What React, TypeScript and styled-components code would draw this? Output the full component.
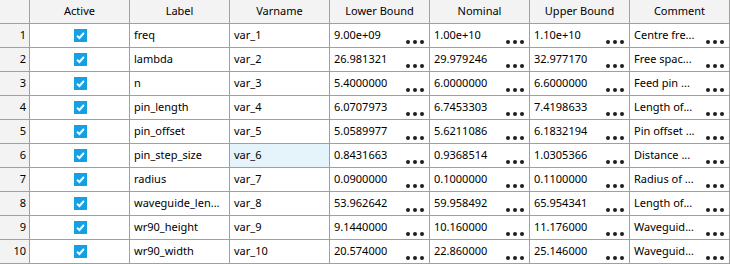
import React from "react";
import styled, { createGlobalStyle } from "styled-components";

const Global = createGlobalStyle`
  html, body { margin: 0; padding: 0; background: #ffffff; }
`;

const Grid = styled.div`
  display: grid;
  grid-template-columns: 30px repeat(7, 100px);
  grid-auto-rows: 24px;
  width: 730px;
  font-family: "Noto Sans", sans-serif;
  font-size: 11px;
  color: #000;
`;

const Cell = styled.div<{ $sel?: boolean }>`
  box-sizing: border-box;
  border-right: 1px solid #a0a0a0;
  border-bottom: 1px solid #a0a0a0;
  background: ${(p) => (p.$sel ? "#e5f3fb" : "#ffffff")};
  position: relative;
  display: flex;
  align-items: center;
  padding: 0 4px 1px 4px;
  white-space: nowrap;
  overflow: hidden;
  font-size: 11px;
  line-height: 16px;
`;

const HeadCell = styled(Cell)`
  background: #f3f3f3;
  justify-content: center;
  color: #000;
`;

const RowHead = styled(Cell)`
  background: #f3f3f3;
  justify-content: flex-end;
  padding: 0 3px 1px 0;
`;

const CheckCell = styled(Cell)`
  justify-content: center;
  padding: 0 0 0 1px;
`;

const Box = styled.span`
  width: 13px;
  height: 13px;
  background: #12a1e4;
  display: inline-flex;
  align-items: center;
  justify-content: center;
`;

const Dots = styled.span`
  position: absolute;
  right: 5px;
  bottom: 3px;
  display: flex;
  gap: 3px;
`;

const Dot = styled.span`
  width: 4px;
  height: 4px;
  border-radius: 50%;
  background: #1e1e1e;
`;

const More = () => (
  <Dots>
    <Dot />
    <Dot />
    <Dot />
  </Dots>
);

const Check = () => (
  <Box>
    <svg width="11" height="11" viewBox="0 0 11 11">
      <path d="M2 5.8 L4.4 8 L9 2.8" stroke="#fff" strokeWidth="2" fill="none" />
    </svg>
  </Box>
);

const rows = [
  ["freq", "var_1", "9.00e+09", "1.00e+10", "1.10e+10", "Centre fre..."],
  ["lambda", "var_2", "26.981321", "29.979246", "32.977170", "Free spac..."],
  ["n", "var_3", "5.4000000", "6.0000000", "6.6000000", "Feed pin ..."],
  ["pin_length", "var_4", "6.0707973", "6.7453303", "7.4198633", "Length of..."],
  ["pin_offset", "var_5", "5.0589977", "5.6211086", "6.1832194", "Pin offset ..."],
  ["pin_step_size", "var_6", "0.8431663", "0.9368514", "1.0305366", "Distance ..."],
  ["radius", "var_7", "0.0900000", "0.1000000", "0.1100000", "Radius of ..."],
  ["waveguide_len...", "var_8", "53.962642", "59.958492", "65.954341", "Length of..."],
  ["wr90_height", "var_9", "9.1440000", "10.160000", "11.176000", "Waveguid..."],
  ["wr90_width", "var_10", "20.574000", "22.860000", "25.146000", "Waveguid..."],
];

const headers = ["", "Active", "Label", "Varname", "Lower Bound", "Nominal", "Upper Bound", "Comment"];

export default function App() {
  return (
    <>
      <Global />
      <Grid>
        {headers.map((h, i) => (
          <HeadCell key={i}>{h}</HeadCell>
        ))}
        {rows.map((r, i) => (
          <React.Fragment key={i}>
            <RowHead>{i + 1}</RowHead>
            <CheckCell>
              <Check />
            </CheckCell>
            <Cell>{r[0]}</Cell>
            <Cell $sel={i === 5}>{r[1]}</Cell>
            <Cell>
              {r[2]}
              <More />
            </Cell>
            <Cell>
              {r[3]}
              <More />
            </Cell>
            <Cell>
              {r[4]}
              <More />
            </Cell>
            <Cell>
              {r[5]}
              <More />
            </Cell>
          </React.Fragment>
        ))}
      </Grid>
    </>
  );
}
